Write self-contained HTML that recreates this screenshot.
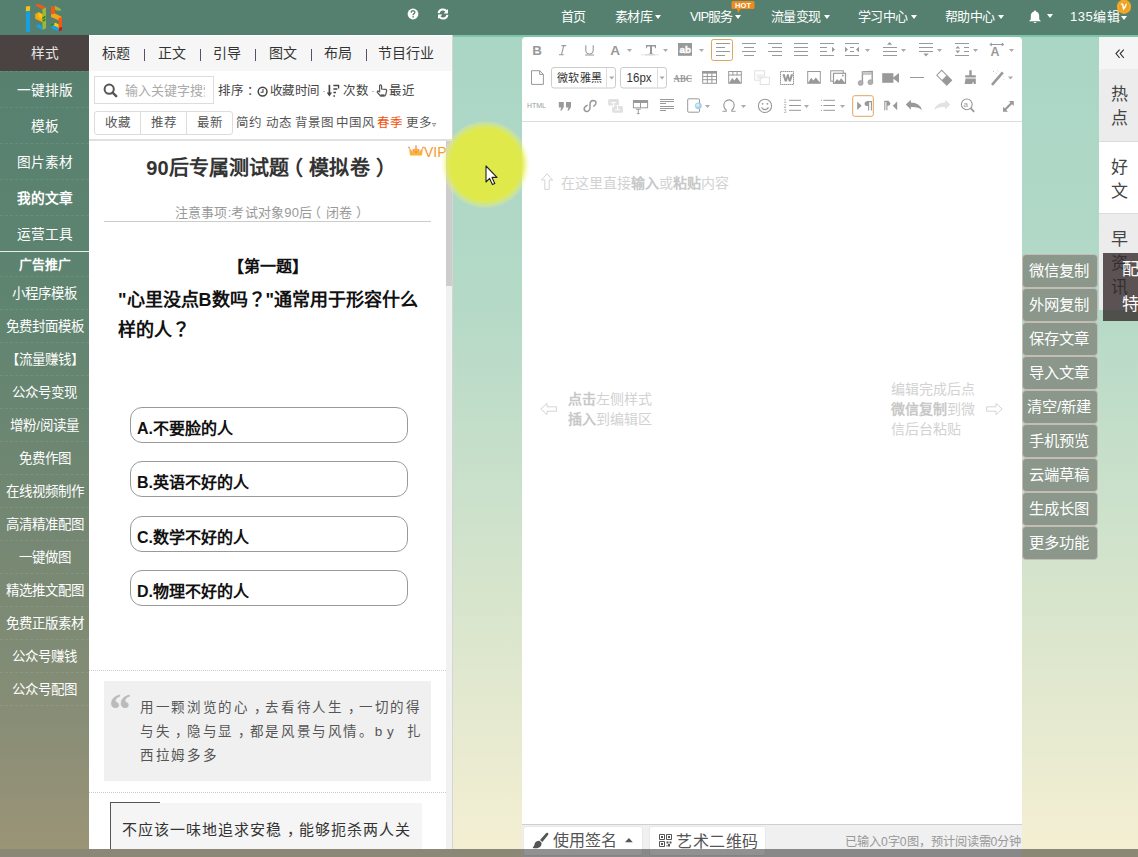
<!DOCTYPE html>
<html lang="zh-CN">
<head>
<meta charset="utf-8">
<style>
*{box-sizing:border-box;margin:0;padding:0}
html,body{width:1138px;height:857px;overflow:hidden}
body{position:relative;font-family:"Liberation Sans",sans-serif;background:linear-gradient(180deg,#a8d5c5 0px,#b4d9c7 300px,#d5e4cc 580px,#f5efd3 857px);color:#333}
.a{position:absolute}
/* header */
#hdr{left:0;top:0;width:1138px;height:35px;background:#55806f}
#hdrline{left:0;top:35px;width:1138px;height:2px;background:#7dc5aa}
.nav{top:8px;color:#fff;font-size:13px;line-height:17px;white-space:nowrap;letter-spacing:-.6px}
.caret{display:inline-block;width:0;height:0;border-left:3px solid transparent;border-right:3px solid transparent;border-top:4px solid #fff;vertical-align:middle;margin-left:3px;margin-top:-2px}
/* sidebar */
#side{left:0;top:35px;width:89px;height:814px;background:linear-gradient(180deg,#56806f 0px,#5e8470 260px,#778873 520px,#858d76 665px,#9b9477 814px)}
.si2{font-size:13.45px !important}
.sep{left:0;width:89px;height:1px;border-top:1px dashed rgba(255,255,255,.09)}
.si{font-size:13.7px;line-height:20px;left:0;width:89px;color:#fff;text-align:center;white-space:nowrap}
/* middle panel */
#mid{left:89px;top:35px;width:364px;height:814px;background:#fff;overflow:hidden;border-right:1px solid #d5d5d5}
.tab{top:8px;font-size:14px;line-height:18px;color:#333;white-space:nowrap}
.pipe{top:13px;width:1px;height:12px;background:#5d4f6b}
.sm{font-size:12.5px;line-height:17px;color:#444;white-space:nowrap;margin-top:1px}
.dot{width:2px;height:1px;background:#bbb}
.fb{font-size:12.5px;line-height:17px;color:#555;text-align:center}
.tg{font-size:12.5px;line-height:17px;color:#555;white-space:nowrap}
.opt{left:41px;width:278px;height:36px;border:1px solid #999;border-radius:12px;font-size:16px;line-height:34px;font-weight:bold;color:#111;padding-left:6px;padding-top:4px}
#ed{left:522px;top:37px;width:500px;height:820px;background:#fff;border-radius:4px 4px 0 0;overflow:hidden}
.ph{font-size:14px;line-height:18px;color:#d2d2d2;white-space:nowrap}
.ph b{color:#c8c8c8}
.rtab{left:1099px;width:39px;border-top:1px solid #dcdcdc;padding-top:14px;padding-left:11.5px;font-size:17px;line-height:24px;color:#444}
.rbtn{left:1022px;width:76px;height:34px;background:#8a978a;border:1px solid #c4bdb5;border-radius:4px;color:#fff;font-size:15.3px;line-height:31px;text-align:center;white-space:nowrap;padding-right:2px}
</style>
</head>
<body>
<div id="hdr" class="a">
<svg class="a" style="left:20px;top:2px" width="50" height="33" viewBox="0 0 50 33">
<polygon points="5.9,4.6 10.1,3.9 10.1,8.8 5.9,9.5" fill="#f8c010"/>
<polygon points="5.9,9.5 10.1,8.8 10.1,29.2 5.9,30.4" fill="#17a0e0"/>
<polygon points="15,3.2 18.5,1.8 26,5.6 22.4,7.2" fill="#f25a14"/>
<polygon points="22.4,7.2 26,5.6 26,26.2 22.4,28" fill="#9cb73a"/>
<polygon points="15.2,12 18.6,10.2 22.4,12.2 22.4,20.2 15.2,16.8" fill="#f7a515"/>
<polygon points="18.6,10.2 22.4,12.2 22.4,17 18.6,15" fill="#fcc90a"/>
<path d="M22.4,16.5 l3,-2 M23,19 l2.5,-1.6" stroke="#1d8a2c" stroke-width="1.6"/>
<polygon points="15.6,23.8 19,22.2 22.4,24.4 22.4,28 19,26.4" fill="#17a0e0"/>
<polygon points="31,4.6 35,3.8 35,13.4 31,14.2" fill="#f25a14"/>
<polygon points="35,3.8 40.5,6.8 41.5,8.4 37.5,8.8 35,7.4" fill="#9cb73a"/>
<polygon points="31,12.6 35,11.6 41.5,14.8 41.5,17.8 38.6,18.2 31,15" fill="#f7a515"/>
<polygon points="38.6,16 42,15.2 42,28.2 38.6,29.4" fill="#f25a14"/>
<polygon points="38.6,25.8 42,25 42,28.2 38.6,29.4" fill="#c21d1d"/>
<polygon points="33,22.2 35.5,20.8 38.6,22.4 38.6,27 33,24.2" fill="#fcc90a"/>
<polygon points="31,24.6 34,23.4 38.6,25.8 38.6,29.6 31,26.2" fill="#17a0e0"/>
<path d="M31.4,23.6 l2.6,-1.8" stroke="#1d8a2c" stroke-width="1.8"/>
</svg>
<svg class="a" style="left:407px;top:8px" width="12" height="12" viewBox="0 0 12 12"><circle cx="6" cy="6" r="5.4" fill="#fff"/><path d="M4.2,4.6 Q4.3,2.6 6.1,2.6 Q7.9,2.7 7.9,4.3 Q7.8,5.4 6.6,6 Q6.1,6.3 6.1,7.3" stroke="#55806f" stroke-width="1.4" fill="none"/><rect x="5.4" y="8.1" width="1.4" height="1.4" fill="#55806f"/></svg>
<svg class="a" style="left:437px;top:8px" width="12" height="12" viewBox="0 0 12 12"><path d="M1.6,5.2 A4.4,4.4 0 0 1 9.6,3.4" stroke="#fff" stroke-width="2" fill="none"/><polygon points="11,1 11,5.6 6.6,5.6" fill="#fff"/><path d="M10.4,6.8 A4.4,4.4 0 0 1 2.4,8.6" stroke="#fff" stroke-width="2" fill="none"/><polygon points="1,11 1,6.4 5.4,6.4" fill="#fff"/></svg>
<div class="a nav" style="left:561px">首页</div>
<div class="a nav" style="left:615px">素材库<i class="caret"></i></div>
<div class="a nav" style="left:690px;letter-spacing:-.9px">VIP服务<i class="caret"></i></div>
<svg class="a" style="left:731px;top:1px" width="24" height="13" viewBox="0 0 24 13"><rect x="0.5" y="0" width="23" height="8" rx="1.5" fill="#f08a1a"/><polygon points="6,7.5 10,7.5 7,12" fill="#f08a1a"/><text x="12" y="7" font-family="Liberation Sans" font-weight="bold" font-size="7.6" fill="#fff" text-anchor="middle">HOT</text></svg>
<div class="a nav" style="left:771px">流量变现<i class="caret"></i></div>
<div class="a nav" style="left:858px">学习中心<i class="caret"></i></div>
<div class="a nav" style="left:945px">帮助中心<i class="caret"></i></div>
<svg class="a" style="left:1028px;top:10px" width="14" height="14" viewBox="0 0 14 14"><path d="M7,0.6 Q8.2,0.6 8.3,1.8 Q11.2,2.6 11.2,6.2 L11.2,9.2 L13,11.2 L1,11.2 L2.8,9.2 L2.8,6.2 Q2.8,2.6 5.7,1.8 Q5.8,0.6 7,0.6 Z" fill="#fff"/><path d="M5.4,12 Q7,14 8.6,12 Z" fill="#fff"/></svg>
<i class="a caret" style="left:1044px;top:16px"></i>
<div class="a nav" style="left:1070px;letter-spacing:.5px">135编辑</div>
<i class="a caret" style="left:1118px;top:18px"></i>
<svg class="a" style="left:1116px;top:-1px" width="16" height="16" viewBox="0 0 16 16"><circle cx="8" cy="7.7" r="7.2" fill="#f0a21e"/><circle cx="8" cy="7.7" r="5.6" fill="none" stroke="#f6c060" stroke-width=".8" stroke-dasharray="1 1"/><path d="M5.4,5.2 Q6.4,4.6 6.8,6 L7.6,10 Q9.6,8 10.2,5.2" stroke="#fff" stroke-width="1.5" fill="none" stroke-linecap="round"/></svg>
</div>
<div id="hdrline" class="a"></div>

<div id="side" class="a">
<div class="a" style="left:0;top:0;width:89px;height:36px;background:#4b4242"></div>
<div class="a" style="left:0;top:1px;width:89px;height:820px">
<div class="a sep" style="top:35px"></div>
<div class="a sep" style="top:71px"></div>
<div class="a sep" style="top:107px"></div>
<div class="a sep" style="top:143px"></div>
<div class="a sep" style="top:179px"></div>
<div class="a" style="left:0;top:215px;width:89px;height:1px;background:rgba(255,255,255,.85)"></div>
<div class="a si" style="top:8px;color:#e6e6e6">样式</div>
<div class="a si" style="top:45px;">一键排版</div>
<div class="a si" style="top:81px;">模板</div>
<div class="a si" style="top:117px;">图片素材</div>
<div class="a si" style="top:153px; font-weight:bold;">我的文章</div>
<div class="a si" style="top:189px;">运营工具</div>
<div class="a si" style="top:220px;font-weight:bold;font-size:12.8px;margin-top:-1px">广告推广</div>
<div class="a sep" style="top:240px"></div>
<div class="a si si2" style="top:248px">小程序模板</div>
<div class="a sep" style="top:273px"></div>
<div class="a si si2" style="top:281px">免费封面模板</div>
<div class="a sep" style="top:306px"></div>
<div class="a si si2" style="top:314px">【流量赚钱】</div>
<div class="a sep" style="top:339px"></div>
<div class="a si si2" style="top:347px">公众号变现</div>
<div class="a sep" style="top:372px"></div>
<div class="a si si2" style="top:380px">增粉/阅读量</div>
<div class="a sep" style="top:405px"></div>
<div class="a si si2" style="top:413px">免费作图</div>
<div class="a sep" style="top:438px"></div>
<div class="a si si2" style="top:446px">在线视频制作</div>
<div class="a sep" style="top:471px"></div>
<div class="a si si2" style="top:479px">高清精准配图</div>
<div class="a sep" style="top:504px"></div>
<div class="a si si2" style="top:512px">一键做图</div>
<div class="a sep" style="top:537px"></div>
<div class="a si si2" style="top:545px">精选推文配图</div>
<div class="a sep" style="top:570px"></div>
<div class="a si si2" style="top:578px">免费正版素材</div>
<div class="a sep" style="top:603px"></div>
<div class="a si si2" style="top:611px">公众号赚钱</div>
<div class="a sep" style="top:636px"></div>
<div class="a si si2" style="top:644px">公众号配图</div>
<div class="a sep" style="top:669px"></div>
</div></div>
<div id="mid" class="a">
<div class="a" style="left:0;top:0;width:363px;height:36px;background:#f6f6f6;border-top:1px solid #fff;border-left:1px solid #fff"></div>
<div class="a" style="left:0;top:1px;width:363px;height:813px">
<div class="a tab" style="left:13px">标题</div><div class="a pipe" style="left:55px"></div>
<div class="a tab" style="left:69px">正文</div><div class="a pipe" style="left:111px"></div>
<div class="a tab" style="left:124px">引导</div><div class="a pipe" style="left:166px"></div>
<div class="a tab" style="left:180px">图文</div><div class="a pipe" style="left:222px"></div>
<div class="a tab" style="left:235px">布局</div><div class="a pipe" style="left:277px"></div>
<div class="a tab" style="left:289px">节目行业</div>
<div class="a" style="left:5px;top:40px;width:120px;height:28px;border:1px solid #ddd;background:#fff"></div>
<svg class="a" style="left:13.5px;top:47px" width="15" height="15" viewBox="0 0 15 15"><circle cx="6.2" cy="6.2" r="4.6" stroke="#555" stroke-width="2" fill="none"/><path d="M9.6,9.6 L13.2,13.2" stroke="#555" stroke-width="2.4" stroke-linecap="round"/></svg>
<div class="a" style="left:36px;top:46px;width:80px;overflow:hidden;white-space:nowrap;font-size:13px;line-height:17px;color:#aaa">输入关键字搜索</div>
<div class="a sm" style="left:129px;top:46px">排序<span style="margin-left:3px">：</span></div>
<svg class="a" style="left:167.5px;top:49.5px" width="11" height="11" viewBox="0 0 11 11"><circle cx="5.6" cy="5.6" r="4.4" stroke="#444" stroke-width="1.5" fill="none"/><path d="M6,3 V6.2 H3.6" stroke="#444" stroke-width="1.1" fill="none"/></svg>
<div class="a sm" style="left:181px;top:46px;letter-spacing:-.6px">收藏时间</div>
<div class="a dot" style="left:234px;top:55px"></div>
<svg class="a" style="left:238px;top:48px" width="13" height="14" viewBox="0 0 13 14"><path d="M2.4,0.8 V10.6" stroke="#444" stroke-width="1.7"/><path d="M-0.2,8.6 L2.4,12.6 L5,8.6 Z" fill="#444"/><path d="M6.4,1.5 H11.6 V4.5 M6.4,5 H10.4 M6.4,8.5 H9 M6.4,12 H8" stroke="#444" stroke-width="1.3" fill="none"/></svg>
<div class="a sm" style="left:254px;top:46px">次数</div>
<div class="a dot" style="left:283px;top:55px"></div>
<svg class="a" style="left:287px;top:48px" width="12" height="13" viewBox="0 0 12 13"><path d="M4,1 Q5.2,0.6 5.6,2 L5.6,5 L9.6,5.4 Q11,5.8 10.6,7.2 L9.6,11 Q9.2,12 8,12 L4.4,12 L1.4,8.4 Q1,7.4 2,7 L3.6,7.8 L3.6,1.6 Z" stroke="#555" stroke-width="1.2" fill="none"/><rect x="4.4" y="10.4" width="4.2" height="2" fill="#555"/></svg>
<div class="a sm" style="left:300px;top:46px">最近</div>
<div class="a" style="left:5px;top:75px;width:139px;height:24px;border:1px solid #ddd;border-radius:3px;background:#fff"></div>
<div class="a" style="left:51px;top:76px;width:1px;height:22px;background:#ddd"></div>
<div class="a" style="left:97px;top:76px;width:1px;height:22px;background:#ddd"></div>
<div class="a fb" style="left:6px;top:79px;width:45px">收藏</div>
<div class="a fb" style="left:52px;top:79px;width:45px">推荐</div>
<div class="a fb" style="left:98px;top:79px;width:45px">最新</div>
<div class="a tg" style="left:147px;top:79px">简约</div>
<div class="a tg" style="left:177px;top:79px">动态</div>
<div class="a tg" style="left:206px;top:79px">背景图</div>
<div class="a tg" style="left:247px;top:79px">中国风</div>
<div class="a tg" style="left:288px;top:79px;color:#f0540e">春季</div>
<div class="a tg" style="left:317px;top:79px">更多<span style="font-size:8px;vertical-align:0px">&#9663;</span></div>
<div class="a" style="left:0;top:103px;width:363px;height:2px;background:#e0e0e0"></div>
<div id="cnt" class="a">
<svg class="a" style="left:319px;top:109px" width="16" height="12" viewBox="0 0 16 12"><path d="M1,2.6 L4.6,6.4 L8,1.6 L11.4,6.4 L15,2.6 L14,10.4 L2,10.4 Z" fill="#f7b33d"/><circle cx="1" cy="2.4" r="1" fill="#e8a0a0"/><circle cx="8" cy="1.2" r="1" fill="#e8a0a0"/><circle cx="15" cy="2.4" r="1" fill="#e8a0a0"/><circle cx="5.2" cy="5" r=".8" fill="#f06060"/><circle cx="10.8" cy="5" r=".8" fill="#f06060"/><circle cx="8" cy="7" r=".8" fill="#f06060"/></svg>
<div class="a" style="left:335px;top:108px;font-size:14px;line-height:17px;color:#f39a2a">VIP</div>
<div class="a" style="left:-1px;top:119px;width:360px;text-align:center;font-size:20px;line-height:26px;font-weight:bold;color:#333;white-space:nowrap;letter-spacing:.1px">90后专属测试题<span style="position:relative;left:-.32em">（</span>模拟卷<span style="position:relative;left:.32em">）</span></div>
<div class="a" style="left:5px;top:168px;width:352px;text-align:center;font-size:13px;line-height:17px;color:#999;white-space:nowrap;letter-spacing:.2px">注意事项:考试对象90后<span style="position:relative;left:-.32em">（</span>闭卷<span style="position:relative;left:.32em">）</span></div>
<div class="a" style="left:15px;top:185px;width:327px;height:1px;background:#ccc"></div>
<div class="a" style="left:0;top:220px;width:357px;text-align:center;font-size:16px;line-height:22px;font-weight:bold;color:#111">【第一题】</div>
<div class="a" style="left:29px;top:249px;width:310px;font-size:18px;line-height:30px;font-weight:bold;color:#111">"心里没点B数吗<span lang="zh-TW">？</span>"通常用于形容什么样的人<span lang="zh-TW">？</span></div>
<div class="a opt" style="top:371px">A.不要脸的人</div>
<div class="a opt" style="top:425px">B.英语不好的人</div>
<div class="a opt" style="top:480px">C.数学不好的人</div>
<div class="a opt" style="top:534px">D.物理不好的人</div>
<div class="a" style="left:0;top:634px;width:357px;height:1px;border-top:1px dotted #ccc"></div>
<div class="a" style="left:15px;top:645px;width:327px;height:100px;background:#f0f0f0"></div>
<div class="a" style="left:20px;top:652px;font-family:'Liberation Serif',serif;font-size:44px;line-height:44px;color:#bbb;font-weight:bold">&#8220;</div>
<div class="a" style="left:51px;top:660px;width:300px;font-size:13.5px;line-height:24px;color:#555;letter-spacing:2.65px;white-space:nowrap">用一颗浏览的心<span style="position:relative;left:.3em">，</span>去看待人生<span style="position:relative;left:.3em">，</span>一切的得<br>与失<span style="position:relative;left:.3em">，</span>隐与显<span style="position:relative;left:.3em">，</span>都是风景与风情。<span style="letter-spacing:4.6px">by </span>扎<br>西拉姆多多</div>
<div class="a" style="left:0;top:756px;width:357px;height:1px;border-top:1px dotted #ccc"></div>
<div class="a" style="left:21px;top:767px;width:312px;height:60px;background:#f5f5f5"></div>
<div class="a" style="left:21px;top:766px;width:1px;height:60px;background:#555"></div>
<div class="a" style="left:21px;top:766px;width:50px;height:1px;background:#555"></div>
<div class="a" style="left:33px;top:782px;font-size:15px;line-height:24px;color:#333;white-space:nowrap;letter-spacing:1.05px">不应该一味地追求安稳<span style="position:relative;left:.3em">，</span>能够扼杀两人关</div>
<div class="a" style="left:357px;top:105px;width:6px;height:708px;background:#f1f1f1"></div>
<div class="a" style="left:357px;top:105px;width:6px;height:145px;background:#cdcdcd"></div>
</div>
</div></div>
<div id="ed" class="a">
<svg class="a" style="left:0;top:0" width="500" height="86" viewBox="522 37 500 86"><text x="532.3" y="55.2" font-family="Liberation Sans" font-weight="bold" font-size="13.4" fill="#999">B</text><path d="M561.4,45.6 h4.8 M558.9,54.8 h4.8 M563.8,45.6 l-2.4,9.2" stroke="#999" stroke-width="1.1" fill="none"/><path d="M585.8,45.3 v5 a3.7,3.7 0 0 0 7.4,0 v-5" stroke="#999" stroke-width="1.1" fill="none"/><path d="M585,55 h9" stroke="#999" stroke-width="1.1"/><text x="610.2" y="55.2" font-family="Liberation Sans" font-weight="bold" font-size="13.6" fill="#999">A</text><path d="M627,49 h5 l-2.5,3 z" fill="#aaa"/><path d="M646,45 h10 v3.2 h-0.8 l-0.6,-1.6 h-2.6 v6.8 l1.4,0.4 v0.9 h-4.8 v-0.9 l1.4,-0.4 v-6.8 h-2.6 l-0.6,1.6 h-0.8z" fill="#999"/><rect x="641" y="54.2" width="18" height="1.2" fill="#e8e8e8"/><rect x="645" y="54.2" width="10" height="1.2" fill="#d8d8d8"/><path d="M663,49 h5 l-2.5,3 z" fill="#aaa"/><rect x="678" y="43" width="14" height="12.8" fill="#999"/><text x="679.6" y="53" font-family="Liberation Sans" font-weight="bold" font-size="9.8" fill="#fff" stroke="#fff" stroke-width=".45">ab</text><path d="M699,49 h5 l-2.5,3 z" fill="#aaa"/><rect x="711.5" y="39.5" width="21" height="21" rx="2" fill="none" stroke="#e0a45c" stroke-width="1"/><rect x="716" y="43.0" width="14" height="1" fill="#999"/><rect x="716" y="47.0" width="9" height="1" fill="#999"/><rect x="716" y="51.0" width="14" height="1" fill="#999"/><rect x="716" y="55.0" width="9" height="1" fill="#999"/><rect x="742.0" y="43.0" width="14" height="1" fill="#999"/><rect x="744.0" y="47.0" width="10" height="1" fill="#999"/><rect x="742.0" y="51.0" width="14" height="1" fill="#999"/><rect x="744.0" y="55.0" width="10" height="1" fill="#999"/><rect x="768" y="43.0" width="14" height="1" fill="#999"/><rect x="772" y="47.0" width="10" height="1" fill="#999"/><rect x="768" y="51.0" width="14" height="1" fill="#999"/><rect x="772" y="55.0" width="10" height="1" fill="#999"/><rect x="794" y="43.0" width="14" height="1" fill="#999"/><rect x="794" y="47.0" width="14" height="1" fill="#999"/><rect x="794" y="51.0" width="14" height="1" fill="#999"/><rect x="794" y="55.0" width="14" height="1" fill="#999"/><rect x="820" y="43.0" width="14" height="1" fill="#999"/><rect x="820" y="55.0" width="14" height="1" fill="#999"/><rect x="820" y="47.0" width="7" height="1" fill="#999"/><rect x="820" y="51.0" width="7" height="1" fill="#999"/><path d="M832,46.8 l3,2.7 l-3,2.7z" fill="#999"/><rect x="845" y="43.0" width="14" height="1" fill="#999"/><rect x="845" y="55.0" width="14" height="1" fill="#999"/><rect x="850" y="47.0" width="4" height="1" fill="#999"/><rect x="850" y="51.0" width="4" height="1" fill="#999"/><path d="M845,46.8 l3,2.7 l-3,2.7z M859,46.8 l-3,2.7 l3,2.7z" fill="#999"/><path d="M865,49 h5 l-2.5,3 z" fill="#aaa"/><rect x="883" y="47.0" width="14" height="1" fill="#999"/><rect x="883" y="51.0" width="14" height="1" fill="#999"/><rect x="883" y="55.0" width="14" height="1" fill="#999"/><path d="M887,44.8 l2.6,-2.8 l2.6,2.8z" fill="#999"/><path d="M901,49 h5 l-2.5,3 z" fill="#aaa"/><rect x="919" y="43.0" width="14" height="1" fill="#999"/><rect x="919" y="47.0" width="14" height="1" fill="#999"/><rect x="919" y="51.0" width="14" height="1" fill="#999"/><path d="M923.4,53.5 h5.2 l-2.6,3z" fill="#999"/><path d="M937,49 h5 l-2.5,3 z" fill="#aaa"/><rect x="955" y="43.0" width="14" height="1" fill="#999"/><rect x="955" y="55.0" width="14" height="1" fill="#999"/><rect x="964" y="47.0" width="5" height="1" fill="#999"/><rect x="964" y="51.0" width="5" height="1" fill="#999"/><path d="M955.4,48.6 l2.4,-2.6 l2.4,2.6z M955.4,50.6 l2.4,2.6 l2.4,-2.6z" fill="#999"/><path d="M973,49 h5 l-2.5,3 z" fill="#aaa"/><path d="M990,44.5 h13.6" stroke="#999" stroke-width="1"/><path d="M989.4,44.5 l2.4,-2 v4z M1004.2,44.5 l-2.4,-2 v4z" fill="#999"/><text x="990.6" y="56.2" font-family="Liberation Sans" font-weight="bold" font-size="12.4" fill="#999">A</text><path d="M1009,49 h5 l-2.5,3 z" fill="#aaa"/><path d="M531.5,70.7 h8.2 l3.7,3.7 v10 h-11.9z M539.7,70.7 v3.7 h3.7" stroke="#999" stroke-width="1" fill="none"/><rect x="551.5" y="67.5" width="64" height="20.5" rx="2.5" fill="#fff" stroke="#ccc" stroke-width="1"/><path d="M606.5,68 v19.5" stroke="#ddd"/><text x="557" y="82" font-family="Liberation Sans" font-size="11.6" fill="#333" textLength="45.5" lengthAdjust="spacingAndGlyphs">微软雅黑</text><path d="M609.2,76.6 h5 l-2.5,3 z" fill="#aaa"/><rect x="620.5" y="67.5" width="46" height="20.5" rx="2.5" fill="#fff" stroke="#ccc" stroke-width="1"/><path d="M657.5,68 v19.5" stroke="#ddd"/><text x="626.6" y="82.4" font-family="Liberation Sans" font-size="12.2" fill="#333" textLength="25" lengthAdjust="spacingAndGlyphs">16px</text><path d="M659.6,76.6 h5 l-2.5,3 z" fill="#aaa"/><text x="673.6" y="82.4" font-family="Liberation Serif" font-weight="bold" font-size="10.8" fill="#999" textLength="18.4" lengthAdjust="spacingAndGlyphs">ABC</text><path d="M673.6,78.6 h18.4" stroke="#999" stroke-width="1"/><rect x="702.7" y="71.5" width="13.8" height="11.8" fill="none" stroke="#999" stroke-width="1"/><rect x="702.2" y="71" width="14.8" height="2.6" fill="#999"/><path d="M702.7,76.5 h13.8 M702.7,79.7 h13.8 M707.3,73 v10 M711.9,73 v10" stroke="#999" stroke-width="1"/><rect x="728.7" y="71.5" width="12.6" height="11.8" fill="none" stroke="#999" stroke-width="1"/><path d="M728.7,75 h12.6 M732.9,71.5 v4 M737.1,71.5 v4" stroke="#999" stroke-width="1"/><path d="M729,83 l3.2,-5 l2.2,2.6 l2.4,-3.4 l4.2,5.8z" fill="#999"/><rect x="754.7" y="70.8" width="10" height="9.4" fill="none" stroke="#e2e2e2" stroke-width="1"/><rect x="760.2" y="77.3" width="9.2" height="7.2" fill="#fff" stroke="#e2e2e2" stroke-width="1"/><text x="756.4" y="78.6" font-family="Liberation Sans" font-weight="bold" font-size="7.5" fill="#e8e8e8">W</text><rect x="780.5" y="71.5" width="13" height="13" fill="none" stroke="#999" stroke-width="1" stroke-dasharray="1.6 0.4"/><path d="M782.4,74.2 h2.4 l1.1,4.2 l1.1,-4.2 h1.6 l1.1,4.2 l1.1,-4.2 h2.4 l-2.4,7.4 h-2 l-1,-3.6 l-1,3.6 h-2z" fill="#999"/><rect x="807.7" y="71.5" width="12.6" height="11.8" fill="none" stroke="#999" stroke-width="1"/><path d="M808,83 l3.2,-5.2 l2.2,2.6 l2.4,-3 l4.5,5.6z" fill="#999"/><rect x="830.7" y="70.8" width="12.6" height="10.4" fill="none" stroke="#999" stroke-width="1"/><rect x="833.5" y="73.3" width="12" height="10" fill="#fff" stroke="#999" stroke-width="1.2"/><path d="M834,83.3 l3,-4.4 l2,2 l2.2,-2.6 l4.2,5z" fill="#999"/><rect x="842" y="74.8" width="1.6" height="1.6" fill="#999"/><path d="M862.4,82.5 v-10.6 l9.8,-0.4 v10.4" stroke="#999" stroke-width="1.4" fill="none"/><path d="M862.4,72.6 h9.8 v2.4 h-9.8z" fill="#bbb"/><path d="M863.4,73 h1 M865.4,73 h1 M867.4,73 h1 M869.4,73 h1 M864.4,74.4 h1 M866.4,74.4 h1 M868.4,74.4 h1 M870.4,74.4 h1" stroke="#eee" stroke-width=".7"/><circle cx="860.6" cy="83" r="2.5" fill="#b0b0b0" stroke="#999" stroke-width=".6"/><circle cx="870.4" cy="82.2" r="2.5" fill="#b0b0b0" stroke="#999" stroke-width=".6"/><rect x="882.2" y="73.2" width="11.2" height="9.6" fill="#999"/><path d="M892.5,78 l6.5,-5 v10z" fill="#999"/><path d="M910,77.5 h14" stroke="#999" stroke-width="1"/><g transform="rotate(-45 944.2 77.7)"><rect x="940.7" y="70.7" width="7" height="14" fill="none" stroke="#999" stroke-width="1"/><rect x="940.7" y="77.7" width="7" height="7.4" fill="#999"/></g><path d="M969.3,70.3 h2.4 v5 h4.1 v2.3 h-10.6 v-2.3 h4.1z" fill="#999"/><path d="M965.6,78.5 h10.2 v5.6 h-1.8 l-1,-2.6 l-0.8,2.6 h-7.6 z" fill="#999"/><path d="M992,84.8 l10.8,-12.4" stroke="#999" stroke-width="2.6"/><path d="M993.2,71.2 l.8,.8 M997.6,70.6 l.6,.6 M995.8,72.8 l.6,.6 M1003.6,79.4 l.6,.6" stroke="#bbb" stroke-width="1"/><path d="M1008,76.6 h5 l-2.5,3 z" fill="#aaa"/><text x="527" y="107.8" font-family="Liberation Sans" font-size="7.4" fill="#999" textLength="19" lengthAdjust="spacingAndGlyphs">HTML</text><path d="M558.8,102 h5 v5 l-2.2,3.6 h-1.4 l1.1,-3 h-2.5z M566,102 h5 v5 l-2.2,3.6 h-1.4 l1.1,-3 h-2.5z" fill="#999"/><path d="M587.2,105.4 Q583.6,107.2 584.2,109.6 Q585.2,112 588,111.2 Q590,110.4 590,108 L590,104 Q590.2,100.6 593,100.4 Q596,100.4 596,102.6 Q596,104.8 593.8,106.2" stroke="#999" stroke-width="1.5" fill="none" stroke-linecap="round"/><rect x="608.1" y="99" width="10.8" height="6.6" rx="1.6" fill="#e0e0e0"/><rect x="612.1" y="106" width="10.9" height="6.8" rx="1.6" fill="#e0e0e0"/><path d="M610.8,102.6 h5 M613.3,102.6 v5" stroke="#fff" stroke-width="1"/><path d="M615,109.8 h5 M617.5,105.4 v4.4" stroke="#fff" stroke-width="1"/><rect x="633.4" y="100.6" width="14.2" height="7.2" fill="none" stroke="#999" stroke-width="1"/><rect x="633.2" y="100.2" width="14.6" height="2.8" fill="#999"/><path d="M640.5,103 v4.8" stroke="#999" stroke-width="1"/><path d="M635.8,109.2 h5 M638.3,109.2 v4.4 M637,113.6 h2.6" stroke="#999" stroke-width="1"/><rect x="660" y="99.0" width="14" height="1" fill="#999"/><rect x="660" y="101.0" width="14" height="1" fill="#999"/><rect x="660" y="106.0" width="14" height="1" fill="#999"/><rect x="660" y="108.0" width="14" height="1" fill="#999"/><rect x="660" y="103.0" width="6" height="1" fill="#999"/><rect x="660" y="110.0" width="6" height="1" fill="#999"/><rect x="687.7" y="98.8" width="11.8" height="13.4" rx="1" fill="none" stroke="#999" stroke-width="1"/><circle cx="698.4" cy="105.8" r="3.4" fill="#a6cfe8"/><circle cx="697.8" cy="105.2" r="1.6" fill="#d8eef8"/><path d="M705,105 h5 l-2.5,3 z" fill="#aaa"/><path d="M722.4,111.2 h3.8 v-1.2 a5.2,5.5 0 1 1 5.6,0 v1.2 h3.8" stroke="#999" stroke-width="1.1" fill="none"/><path d="M741,105 h5 l-2.5,3 z" fill="#aaa"/><circle cx="765" cy="105.9" r="6.6" fill="none" stroke="#999" stroke-width="1.1"/><circle cx="762.6" cy="103.8" r=".9" fill="#999"/><circle cx="767.4" cy="103.8" r=".9" fill="#999"/><path d="M761.6,107.2 a3.6,3.6 0 0 0 6.8,0" stroke="#999" stroke-width="1.1" fill="none"/><rect x="789" y="99.8" width="12" height="1" fill="#999"/><rect x="789" y="105.0" width="12" height="1" fill="#999"/><rect x="789" y="109.8" width="12" height="1" fill="#999"/><text x="783.8" y="103" font-family="Liberation Sans" font-size="4.6" fill="#999">1</text><text x="783.8" y="108" font-family="Liberation Sans" font-size="4.6" fill="#999">2</text><text x="783.8" y="113" font-family="Liberation Sans" font-size="4.6" fill="#999">3</text><path d="M804,105 h5 l-2.5,3 z" fill="#aaa"/><rect x="823.4" y="99.8" width="11.6" height="1" fill="#999"/><rect x="823.4" y="105.0" width="11.6" height="1" fill="#999"/><rect x="823.4" y="109.8" width="11.6" height="1" fill="#999"/><rect x="821" y="99.8" width="1" height="1" fill="#999"/><rect x="821" y="105" width="1" height="1" fill="#999"/><rect x="821" y="109.8" width="1" height="1" fill="#999"/><path d="M840,105 h5 l-2.5,3 z" fill="#aaa"/><rect x="852.7" y="95.7" width="20.6" height="20.6" rx="2" fill="none" stroke="#e0a45c" stroke-width="1"/><path d="M857.2,101.6 l4.4,4.2 l-4.4,4.2z" fill="#999"/><path d="M866.6,101.6 h4.8 v8.8 M868.6,101.6 v8.8" stroke="#999" stroke-width="1.1" fill="none"/><path d="M866.8,101.6 a2.3,2.2 0 0 0 0,4.4 h1.6 v-4.4z" fill="#999"/><path d="M884.2,101.4 h4.6 M884.8,101.4 v8.8 M886.9,101.4 v8.8" stroke="#999" stroke-width="1.1" fill="none"/><path d="M887,101.4 h1 a2.3,2.2 0 0 1 0,4.4 h-1z" fill="#999"/><path d="M897.2,101.4 l-4.4,4.4 l4.4,4.4z" fill="#999"/><path d="M905.8,104.4 l5,-4.6 v2.8 q9,0 11.2,7.6 q-3.6,-3.6 -11.2,-3.2 v2.8z" fill="#999"/><path d="M950.2,104.4 l-5,-4.6 v2.8 q-9,0 -11.2,7.6 q3.6,-3.6 11.2,-3.2 v2.8z" fill="#e2e2e2"/><circle cx="966.8" cy="104.4" r="5.4" fill="none" stroke="#999" stroke-width="1.1"/><path d="M970.6,108.2 l3.6,3.6" stroke="#999" stroke-width="1.8"/><text x="963.4" y="107.4" font-family="Liberation Sans" font-size="8" fill="#999">a</text><path d="M1004.4,110.2 l8,-8" stroke="#999" stroke-width="2.2"/><path d="M1003,111.8 v-5 l5,5z M1013.8,101 v5 l-5,-5z" fill="#999"/></svg>
<div class="a" style="left:0;top:84px;width:500px;height:1px;background:#ddd"></div>
<svg class="a" style="left:18px;top:136px" width="14" height="18" viewBox="0 0 14 18"><path d="M7,0.8 L12.6,7 H9.2 V16.4 H4.8 V7 H1.4 Z" fill="none" stroke="#d4d4d4" stroke-width="1"/></svg>
<div class="a ph" style="left:39px;top:137px">在这里直接<b>输入</b>或<b>粘贴</b>内容</div>
<svg class="a" style="left:18px;top:365px" width="18" height="14" viewBox="0 0 18 14"><path d="M0.8,7 L7,1.4 V4.8 H16.4 V9.2 H7 V12.6 Z" fill="none" stroke="#d4d4d4" stroke-width="1"/></svg>
<div class="a ph" style="left:46px;top:352px;line-height:20px"><b>点击</b>左侧样式<br><b>插入</b>到编辑区</div>
<div class="a ph" style="left:369px;top:342px;line-height:20px">编辑完成后点<br><b>微信复制</b>到微<br>信后台粘贴</div>
<svg class="a" style="left:463px;top:365px" width="18" height="14" viewBox="0 0 18 14"><path d="M17.2,7 L11,1.4 V4.8 H1.6 V9.2 H11 V12.6 Z" fill="none" stroke="#d4d4d4" stroke-width="1"/></svg>
<div class="a" style="left:0;top:787px;width:500px;height:33px;background:#f0f0f0;border-top:1px solid #cfcfcf"></div>
<div class="a" style="left:1px;top:789px;width:120px;height:30px;background:#fff;border-radius:3px;border:1px solid #e8e8e8"></div>
<svg class="a" style="left:10px;top:795px" width="17" height="17" viewBox="0 0 17 17"><path d="M15.6,0.8 Q16.8,1.4 16.2,2.8 L10.4,10 L8,8 L14,1.2 Q14.6,0.5 15.6,0.8Z" fill="#555"/><path d="M7.4,8.8 L9.6,10.8 Q9.8,15.6 5,16.2 Q1.6,16.6 0.6,15.4 Q2.4,14.2 2.6,12.2 Q3,9.2 7.4,8.8Z" fill="#555"/></svg>
<div class="a" style="left:31px;top:794px;font-size:16px;line-height:20px;color:#555">使用签名</div>
<svg class="a" style="left:103px;top:801px" width="8" height="5" viewBox="0 0 8 5"><path d="M0,4.2 L3.9,0 L7.8,4.2Z" fill="#555"/></svg>
<div class="a" style="left:127px;top:789px;width:117px;height:30px;background:#fff;border-radius:3px;border:1px solid #e8e8e8"></div>
<svg class="a" style="left:137px;top:797px" width="13" height="13" viewBox="0 0 13 13"><path d="M0.5,0.5 h5 v5 h-5z M7.5,0.5 h5 v5 h-5z M0.5,7.5 h5 v5 h-5z" fill="none" stroke="#555" stroke-width="1"/><rect x="2" y="2" width="2" height="2" fill="#555"/><rect x="9" y="2" width="2" height="2" fill="#555"/><rect x="2" y="9" width="2" height="2" fill="#555"/><path d="M7.5,7.5 h2 v2 h-2z M10.5,7.5 h2 v2 h-2z M9,10 h2 v2.5 h-2z M7.5,11 h1 v1.5 h-1z" fill="#555"/></svg>
<div class="a" style="left:154px;top:795px;font-size:16px;line-height:20px;color:#555;letter-spacing:.6px">艺术二维码</div>
<div class="a" style="left:323px;top:796px;font-size:12.2px;line-height:18px;color:#999;white-space:nowrap;letter-spacing:0px">已输入0字0图，预计阅读需0分钟</div>
</div><div id="rt" class="a" style="left:1099px;top:37px;width:39px;height:273px;background:#f5f5f5"></div>
<svg class="a" style="left:1115px;top:49px" width="10" height="10" viewBox="0 0 10 10"><path d="M4.6,0.6 L1,4.6 L4.6,8.8 M8.8,0.6 L5.2,4.6 L8.8,8.8" stroke="#333" stroke-width="1.1" fill="none"/></svg>
<div class="a rtab" style="top:69px;height:72px;background:#ececec;border-top:0;border-radius:4px 0 0 0">热<br>点</div>
<div class="a rtab" style="top:141px;height:72px;background:#fff">好<br>文</div>
<div class="a rtab" style="top:213px;height:97px;background:#ececec">早<br>资<br>讯</div>
<div class="a" style="left:1103px;top:253px;width:35px;height:68px;background:rgba(50,40,40,.78)"></div>
<div class="a" style="left:1122px;top:252px;font-size:17px;line-height:35px;color:#fff;white-space:nowrap">配<br>特</div>
<div class="a rbtn" style="top:254px">微信复制</div>
<div class="a rbtn" style="top:288px">外网复制</div>
<div class="a rbtn" style="top:322px">保存文章</div>
<div class="a rbtn" style="top:356px">导入文章</div>
<div class="a rbtn" style="top:390px">清空/新建</div>
<div class="a rbtn" style="top:424px">手机预览</div>
<div class="a rbtn" style="top:458px">云端草稿</div>
<div class="a rbtn" style="top:492px">生成长图</div>
<div class="a rbtn" style="top:526px">更多功能</div>
<div class="a" style="left:0;top:849px;width:1138px;height:8px;background:rgba(0,0,0,.43)"></div>
<div class="a" style="left:440.5px;top:119.5px;width:89px;height:89px;border-radius:50%;background:radial-gradient(circle closest-side,#dfe94a 0,#dfe94a 79%,rgba(226,236,78,.85) 84%,rgba(240,245,110,.35) 93%,rgba(245,245,130,0) 100%)"></div>
<svg class="a" style="left:485px;top:164.5px" width="14" height="22" viewBox="0 0 14 22"><path d="M1,1 L1,17 L4.6,13.4 L7.4,19.6 L9.8,18.6 L7,12.4 L12,12.4 Z" fill="#fff" stroke="#222" stroke-width="1.1" stroke-linejoin="round"/></svg>

</body>
</html>
